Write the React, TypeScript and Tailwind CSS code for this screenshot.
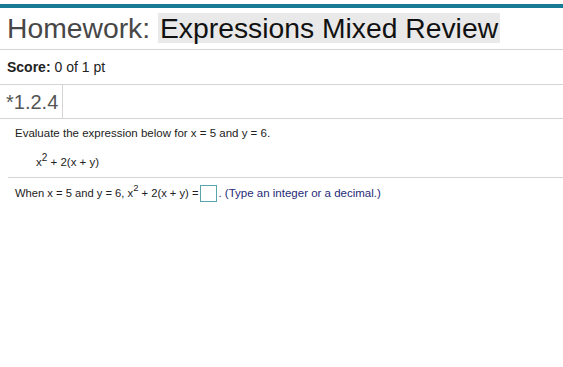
import React from 'react';

const App: React.FC = () => {
  return (
    <div className="w-[563px] h-[367px] bg-white font-['Liberation_Sans',Arial,sans-serif] text-[#222] overflow-hidden">
      {/* Top accent bar */}
      <div className="mt-[4px] h-[4px] bg-[#187a94]" />

      {/* Title */}
      <div className="h-[42px] border-b border-[#d4d4d4] pl-[7px] pt-[5px]">
        <h1 className="text-[28.3px] leading-[30px] whitespace-nowrap">
          <span className="text-[#474747]">Homework:</span>{' '}
          <span className="inline-block bg-[#e9e9e9] px-[2px] text-[#111]">Expressions Mixed Review</span>
        </h1>
      </div>

      {/* Score */}
      <div className="h-[35px] border-b border-[#d4d4d4] pl-[7px] flex items-center text-[14px]">
        <span className="font-bold">Score:</span>
        <span className="ml-[4px]">0 of 1 pt</span>
      </div>

      {/* Question number */}
      <div className="h-[34px] border-b border-[#d4d4d4] flex">
        <div className="w-[63px] border-r border-[#d4d4d4] pl-[6px] flex items-center text-[20px] text-[#555]">
          *1.2.4
        </div>
      </div>

      {/* Question body */}
      <div className="pl-[15px] pt-[7px] text-[11.5px] text-[#222]">
        <p className="leading-[14px]">Evaluate the expression below for x = 5 and y = 6.</p>
        <p className="pl-[21px] mt-[15px] leading-[14px]">
          x<sup className="text-[10px] -top-[5px]">2</sup> + 2(x + y)
        </p>
      </div>
      <div className="ml-[8px] mt-[8px] border-t border-[#d4d4d4]" />
      <div className="pl-[15px] pt-[7px] text-[11.2px] flex items-center h-[24px]">
        <span>
          When x = 5 and y = 6, x<sup className="text-[9.5px] -top-[6px]">2</sup> + 2(x + y) =
        </span>
        <span className="inline-block w-[17px] h-[17px] border border-[#58a6ab] ml-[2px]" />
        <span className="text-[#1f2a78] text-[11.5px] ml-[1px]">. (Type an integer or a decimal.)</span>
      </div>
    </div>
  );
};

export default App;
